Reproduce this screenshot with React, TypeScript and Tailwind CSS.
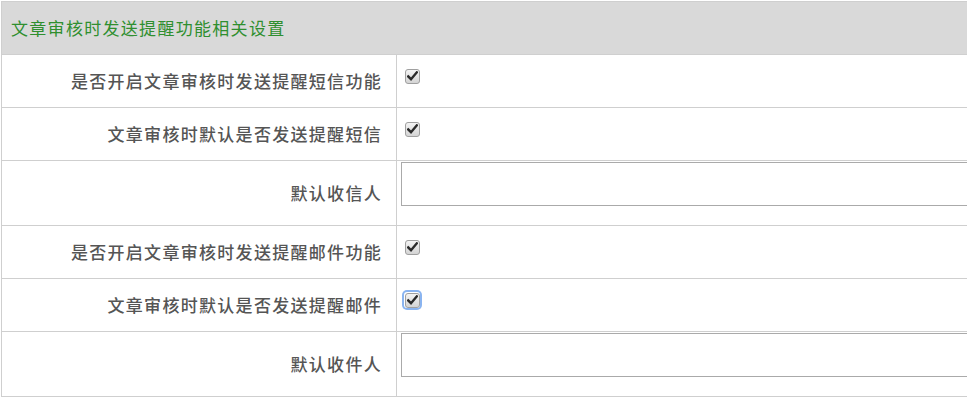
import React from 'react';

type Row =
  | { kind: 'check'; label: string; focused?: boolean }
  | { kind: 'input'; label: string };

const rows: Row[] = [
  { kind: 'check', label: '是否开启文章审核时发送提醒短信功能' },
  { kind: 'check', label: '文章审核时默认是否发送提醒短信' },
  { kind: 'input', label: '默认收信人' },
  { kind: 'check', label: '是否开启文章审核时发送提醒邮件功能' },
  { kind: 'check', label: '文章审核时默认是否发送提醒邮件', focused: true },
  { kind: 'input', label: '默认收件人' },
];

// grey classic checkbox, always ticked
function FakeCheckbox({ focused }: { focused?: boolean }) {
  return (
    <span
      className={`flex h-[16px] w-[16px] items-center justify-center rounded-[3px] ${
        focused ? 'ring-2 ring-[#8ab4f0]' : ''
      }`}
    >
      <span className="flex h-[15px] w-[15px] items-center justify-center rounded-[3px] border border-[#a0a0a0] bg-gradient-to-b from-[#f4f4f4] to-[#d4d4d4]">
        <svg width="11" height="10" viewBox="0 0 11 10">
          <path d="M1.2 5.4 L4 8.2 L9.8 1.4" fill="none" stroke="#2a2a2a" strokeWidth="2.4" strokeLinecap="square" />
        </svg>
      </span>
    </span>
  );
}

export default function App() {
  return (
    <div
      className="h-[398px] w-[967px] overflow-hidden bg-white"
      style={{ fontFamily: '"Noto Sans CJK SC", sans-serif' }}
    >
      <table className="mt-px ml-px w-[1100px] table-fixed border-collapse">
        <colgroup>
          <col className="w-[395px]" />
          <col />
        </colgroup>
        <tbody>
          <tr>
            <td
              colSpan={2}
              className="h-[53px] border border-[#cfcfcf] bg-[#d9d9d9] px-[9px] text-[17px] tracking-[1.3px] text-[#2f8f2f]"
            >
              文章审核时发送提醒功能相关设置
            </td>
          </tr>
          {rows.map((row, i) =>
            row.kind === 'check' ? (
              <tr key={i}>
                <td className="h-[53px] border border-[#cfcfcf] pr-[14px] text-right text-[17px] font-medium tracking-[1.3px] text-[#555]">
                  {row.label}
                </td>
                <td className="border border-[#cfcfcf] pl-[7px] align-top">
                  <div className="flex pt-[13px]">
                    <FakeCheckbox focused={row.focused} />
                  </div>
                </td>
              </tr>
            ) : (
              <tr key={i}>
                <td className="h-[65px] border border-[#cfcfcf] pr-[14px] text-right text-[17px] font-medium tracking-[1.3px] text-[#555]">
                  {row.label}
                </td>
                <td className="border border-[#cfcfcf] pl-[4px] align-top">
                  <textarea className="mt-px block h-[44px] w-[800px] resize-none border border-[#aaa] outline-none" />
                </td>
              </tr>
            )
          )}
        </tbody>
      </table>
    </div>
  );
}
